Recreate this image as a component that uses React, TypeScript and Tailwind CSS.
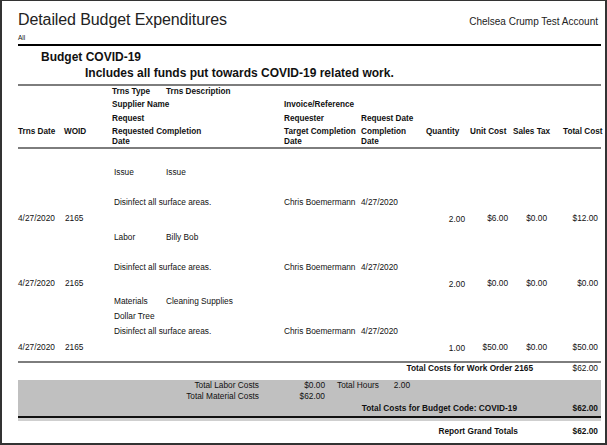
import React from "react";

const ITEMS = [
  {
    type: "Issue",
    desc: "Issue",
    supplier: "",
    request: "Disinfect all surface areas.",
    requester: "Chris Boemermann",
    reqDate: "4/27/2020",
    date: "4/27/2020",
    woid: "2165",
    qty: "2.00",
    unit: "$6.00",
    tax: "$0.00",
    total: "$12.00",
    gap: "",
  },
  {
    type: "Labor",
    desc: "Billy Bob",
    supplier: "",
    request: "Disinfect all surface areas.",
    requester: "Chris Boemermann",
    reqDate: "4/27/2020",
    date: "4/27/2020",
    woid: "2165",
    qty: "2.00",
    unit: "$0.00",
    tax: "$0.00",
    total: "$0.00",
    gap: "mt-[4px]",
  },
  {
    type: "Materials",
    desc: "Cleaning Supplies",
    supplier: "Dollar Tree",
    request: "Disinfect all surface areas.",
    requester: "Chris Boemermann",
    reqDate: "4/27/2020",
    date: "4/27/2020",
    woid: "2165",
    qty: "1.00",
    unit: "$50.00",
    tax: "$0.00",
    total: "$50.00",
    gap: "mt-[3px]",
  },
];

const App = () => {
  return (
    <div className="w-[607px] h-[445px] box-border overflow-hidden whitespace-nowrap border-t border-x-2 border-b-2 border-[#333] bg-white pl-[16px] pr-[4px] pt-[10px] font-['Liberation_Sans',Arial,sans-serif] text-[#111]">
      {/* report title */}
      <div className="flex justify-between items-baseline h-[18px]">
        <h1 className="text-[16px] leading-[18px] text-[#222] tracking-[-0.1px]">
          Detailed Budget Expenditures
        </h1>
        <span className="text-[10px] leading-[18px] pr-[3px] text-[#222]">
          Chelsea Crump Test Account
        </span>
      </div>
      <div className="mt-[5px] h-[8px] text-[6.5px] leading-[8px]">All</div>
      <div className="mt-[2px] h-[2px] bg-black" />

      <h2 className="mt-[4px] pl-[23px] text-[12px] leading-[14px] font-bold">
        Budget COVID-19
      </h2>
      <p className="mt-[2px] pl-[67px] text-[12px] leading-[14px] font-bold">
        Includes all funds put towards COVID-19 related work.
      </p>
      <div className="mt-[4px] h-[2px] bg-[#7d7d7d]" />

      {/* column headers */}
      <div className="text-[8.2px] font-bold">
        <div className="flex h-[11px] leading-[11px]">
          <span className="w-[94px]" />
          <span className="w-[54px]">Trns Type</span>
          <span>Trns Description</span>
        </div>
        <div className="flex h-[15px] leading-[15px]">
          <span className="w-[94px]" />
          <span className="w-[172px]">Supplier Name</span>
          <span>Invoice/Reference</span>
        </div>
        <div className="flex h-[13px] leading-[13px]">
          <span className="w-[94px]" />
          <span className="w-[172px]">Request</span>
          <span className="w-[77px]">Requester</span>
          <span>Request Date</span>
        </div>
        <div className="flex pt-[2px] leading-[10px]">
          <span className="w-[46px] shrink-0">Trns Date</span>
          <span className="w-[48px] shrink-0">WOID</span>
          <span className="w-[172px] shrink-0">
            Requested Completion
            <br />
            Date
          </span>
          <span className="w-[77px] shrink-0">
            Target Completion
            <br />
            Date
          </span>
          <span className="w-[65px] shrink-0">
            Completion
            <br />
            Date
          </span>
          <span className="w-[44px] shrink-0">Quantity</span>
          <span className="w-[43px] shrink-0">Unit Cost</span>
          <span className="w-[50px] shrink-0">Sales Tax</span>
          <span>Total Cost</span>
        </div>
      </div>
      <div className="h-[2px] bg-[#7d7d7d]" />

      {/* detail lines */}
      <div className="pt-[16px] text-[8.3px]">
        {ITEMS.map((item, i) => (
          <div key={i} className={item.gap}>
            <div className="flex h-[15px] leading-[15px]">
              <span className="w-[96px]" />
              <span className="w-[52px]">{item.type}</span>
              <span>{item.desc}</span>
            </div>
            <div className="flex h-[15px] leading-[15px]">
              <span className="w-[96px]" />
              <span>{item.supplier}</span>
            </div>
            <div className="flex h-[15px] leading-[15px]">
              <span className="w-[96px]" />
              <span className="w-[170px]">{item.request}</span>
              <span className="w-[77px]">{item.requester}</span>
              <span>{item.reqDate}</span>
            </div>
            <div className="flex h-[16px] leading-[16px]">
              <span className="w-[47px]">{item.date}</span>
              <span className="w-[49px]">{item.woid}</span>
              <span className="w-[351px] text-right translate-y-[1px]">
                {item.qty}
              </span>
              <span className="w-[43px] text-right">{item.unit}</span>
              <span className="w-[39px] text-right">{item.tax}</span>
              <span className="w-[51px] text-right">{item.total}</span>
            </div>
          </div>
        ))}
      </div>

      <div className="mt-[6px] h-[2px] bg-[#7d7d7d]" />
      <div className="flex justify-end pr-[3px] text-[8.3px] leading-[10px]">
        <span className="font-bold">Total Costs for Work Order 2165</span>
        <span className="w-[65px] text-right">$62.00</span>
      </div>

      {/* budget code totals */}
      <div className="mt-[7px] bg-[#c0c0c0] pb-[3px] text-[8.3px] leading-[10px]">
        <div className="flex">
          <span className="w-[241px] text-right">Total Labor Costs</span>
          <span className="w-[66px] text-right">$0.00</span>
          <span className="w-[54px] pl-[12px]">Total Hours</span>
          <span className="w-[31px] text-right">2.00</span>
        </div>
        <div className="flex mt-[1px]">
          <span className="w-[241px] text-right">Total Material Costs</span>
          <span className="w-[66px] text-right">$62.00</span>
        </div>
        <div className="flex justify-end mt-[2px] pr-[3px] font-bold">
          <span>Total Costs for Budget Code: COVID-19</span>
          <span className="w-[81px] text-right">$62.00</span>
        </div>
      </div>
      <div className="h-[2px] bg-[#111]" />
      <div className="h-[3px] bg-[#cfcfcf]" />

      <div className="mt-[5px] flex justify-end pr-[3px] text-[8.3px] leading-[10px] font-bold">
        <span>Report Grand Totals</span>
        <span className="w-[80px] text-right">$62.00</span>
      </div>
    </div>
  );
};

export default App;
